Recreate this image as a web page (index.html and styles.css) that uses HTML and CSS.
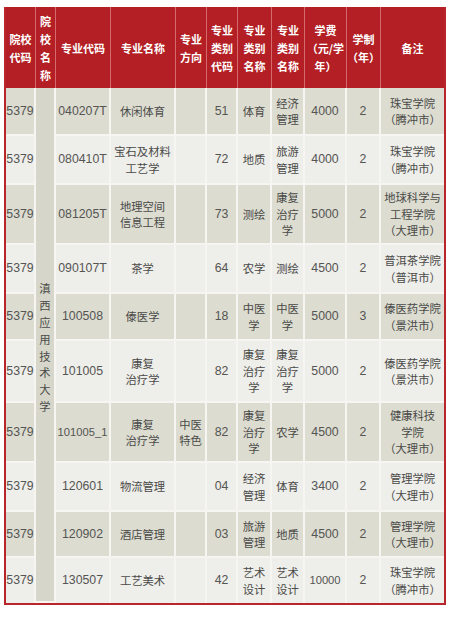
FILE: index.html
```html
<!DOCTYPE html>
<html lang="zh">
<head>
<meta charset="utf-8">
<title>滇西应用技术大学 专业表</title>
<link rel="stylesheet" href="styles.css">
</head>
<body>
<table class="plan">
  <colgroup>
    <col class="c1"><col class="c2"><col class="c3"><col class="c4"><col class="c5"><col class="c6"><col class="c7"><col class="c8"><col class="c9"><col class="c10"><col class="c11">
  </colgroup>
  <thead>
    <tr class="head">
      <th>院校<br>代码</th>
      <th>院<br>校<br>名<br>称</th>
      <th>专业代码</th>
      <th>专业名称</th>
      <th>专业<br>方向</th>
      <th>专业<br>类别<br>代码</th>
      <th>专业<br>类别<br>名称</th>
      <th>专业<br>类别<br>名称</th>
      <th>学费<br>（元/学<br>年）</th>
      <th>学制<br>（年）</th>
      <th class="last">备注</th>
    </tr>
  </thead>
  <tbody>
    <tr class="dark r48">
      <td class="num">5379</td>
      <td class="school" rowspan="10">滇西应用技术大学</td>
      <td class="num">040207T</td>
      <td>休闲体育</td>
      <td></td>
      <td class="num">51</td>
      <td>体育</td>
      <td>经济<br>管理</td>
      <td class="num">4000</td>
      <td class="num">2</td>
      <td class="last">珠宝学院<br>（腾冲市）</td>
    </tr>
    <tr class="light r49">
      <td class="num">5379</td>
      <td class="num">080410T</td>
      <td>宝石及材料<br>工艺学</td>
      <td></td>
      <td class="num">72</td>
      <td>地质</td>
      <td>旅游<br>管理</td>
      <td class="num">4000</td>
      <td class="num">2</td>
      <td class="last">珠宝学院<br>（腾冲市）</td>
    </tr>
    <tr class="dark r60">
      <td class="num">5379</td>
      <td class="num">081205T</td>
      <td>地理空间<br>信息工程</td>
      <td></td>
      <td class="num">73</td>
      <td>测绘</td>
      <td>康复<br>治疗<br>学</td>
      <td class="num">5000</td>
      <td class="num">2</td>
      <td class="last">地球科学与<br>工程学院<br>（大理市）</td>
    </tr>
    <tr class="light r49">
      <td class="num">5379</td>
      <td class="num">090107T</td>
      <td>茶学</td>
      <td></td>
      <td class="num">64</td>
      <td>农学</td>
      <td>测绘</td>
      <td class="num">4500</td>
      <td class="num">2</td>
      <td class="last">普洱茶学院<br>（普洱市）</td>
    </tr>
    <tr class="dark r47">
      <td class="num">5379</td>
      <td class="num">100508</td>
      <td>傣医学</td>
      <td></td>
      <td class="num">18</td>
      <td>中医<br>学</td>
      <td>中医<br>学</td>
      <td class="num">5000</td>
      <td class="num">3</td>
      <td class="last">傣医药学院<br>（景洪市）</td>
    </tr>
    <tr class="light r62">
      <td class="num">5379</td>
      <td class="num">101005</td>
      <td>康复<br>治疗学</td>
      <td></td>
      <td class="num">82</td>
      <td>康复<br>治疗<br>学</td>
      <td>康复<br>治疗<br>学</td>
      <td class="num">5000</td>
      <td class="num">2</td>
      <td class="last">傣医药学院<br>（景洪市）</td>
    </tr>
    <tr class="dark r60">
      <td class="num">5379</td>
      <td class="num tight">101005_1</td>
      <td>康复<br>治疗学</td>
      <td>中医<br>特色</td>
      <td class="num">82</td>
      <td>康复<br>治疗<br>学</td>
      <td>农学</td>
      <td class="num">4500</td>
      <td class="num">2</td>
      <td class="last">健康科技<br>学院<br>（大理市）</td>
    </tr>
    <tr class="light r49">
      <td class="num">5379</td>
      <td class="num">120601</td>
      <td>物流管理</td>
      <td></td>
      <td class="num">04</td>
      <td>经济<br>管理</td>
      <td>体育</td>
      <td class="num">3400</td>
      <td class="num">2</td>
      <td class="last">管理学院<br>（大理市）</td>
    </tr>
    <tr class="dark r46">
      <td class="num">5379</td>
      <td class="num">120902</td>
      <td>酒店管理</td>
      <td></td>
      <td class="num">03</td>
      <td>旅游<br>管理</td>
      <td>地质</td>
      <td class="num">4500</td>
      <td class="num">2</td>
      <td class="last">管理学院<br>（大理市）</td>
    </tr>
    <tr class="light r47 end">
      <td class="num">5379</td>
      <td class="num">130507</td>
      <td>工艺美术</td>
      <td></td>
      <td class="num">42</td>
      <td>艺术<br>设计</td>
      <td>艺术<br>设计</td>
      <td class="num tight">10000</td>
      <td class="num">2</td>
      <td class="last">珠宝学院<br>（腾冲市）</td>
    </tr>
  </tbody>
</table>
</body>
</html>
```

FILE: styles.css
```css
html, body {
  margin: 0;
  padding: 0;
  background: #ffffff;
}

body {
  font-family: "Liberation Sans", "Noto Sans CJK SC", sans-serif;
  color: #4a4a48;
}

.plan {
  margin: 7px 0 0 4px;
  width: 442px;
  table-layout: fixed;
  border-collapse: separate;
  border-spacing: 0;
  border-left: 2px solid #b8262b;
  border-right: 2px solid #b8262b;
  border-bottom: 2px solid #b8262b;
}

.c1 { width: 30px; }
.c2 { width: 20px; }
.c3 { width: 55px; }
.c4 { width: 65px; }
.c5 { width: 31px; }
.c6 { width: 31px; }
.c7 { width: 34px; }
.c8 { width: 33px; }
.c9 { width: 42px; }
.c10 { width: 34px; }
.c11 { width: 63px; }

.plan th,
.plan td {
  box-sizing: border-box;
  padding: 0;
  text-align: center;
  vertical-align: middle;
  white-space: nowrap;
  overflow: visible;
}

.head th {
  height: 81px;
  background: #b31f24;
  color: #ffffff;
  font-family: "Noto Sans CJK SC", sans-serif;
  font-weight: 700;
  font-size: 11px;
  line-height: 18px;
  border-right: 1px solid #d46a6d;
}

.head th.last {
  border-right: none;
}

.plan td {
  font-family: "Noto Sans CJK SC", sans-serif;
  font-size: 11.3px;
  line-height: 16.5px;
  border-right: 2px solid #f6f5f1;
  border-bottom: 2px solid #f6f5f1;
}

.plan td.last {
  border-right: none;
}

.plan tr.end td {
  border-bottom: none;
}

.plan td.num {
  font-family: "Liberation Sans", sans-serif;
  font-size: 12.3px;
  color: #555553;
}

.plan td.tight {
  font-size: 11.2px;
}

.dark td {
  background: #dcdcd0;
}

.light td {
  background: #eeeeea;
}

.plan td.school {
  background: #d6d7ca;
  white-space: normal;
  word-break: break-all;
  line-height: 16.8px;
  padding-top: 6px;
}

.r46 td { height: 46px; }
.r47 td { height: 47px; }
.r48 td { height: 48px; }
.r49 td { height: 49px; }
.r60 td { height: 60px; }
.r62 td { height: 62px; }
.r47.end td { height: 45px; }
```
